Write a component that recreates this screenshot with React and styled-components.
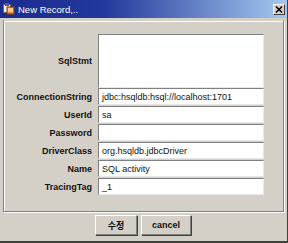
import { Fragment } from "react";
import styled, { createGlobalStyle } from "styled-components";

const GlobalStyle = createGlobalStyle`
  body {
    margin: 0;
    background: #d4d0c8;
    font-family: "Liberation Sans", Arial, "Noto Sans CJK KR", sans-serif;
  }
`;

const Window = styled.div`
  width: 288px;
  height: 243px;
  box-sizing: border-box;
  background: #d4d0c8;
  border-right: 1px solid #404040;
  border-bottom: 2px solid #404040;
  display: flex;
  flex-direction: column;
`;

const TitleBar = styled.div`
  height: 18px;
  display: flex;
  align-items: center;
  padding: 0 2px 0 3px;
  background: linear-gradient(to right, #1a2c90 0%, #22389a 36%, #a6c8ef 100%);
  color: #fff;
  font-size: 9.5px;
`;

const TitleText = styled.span`
  margin-left: 3px;
  flex: 1;
`;

const CloseBtn = styled.div`
  width: 12px;
  height: 11px;
  box-sizing: border-box;
  background: #d4d0c8;
  border: 1px solid;
  border-color: #fff #404040 #404040 #fff;
  display: flex;
  align-items: center;
  justify-content: center;
  margin-top: 1px;
`;

const Panel = styled.div`
  margin: 2px 3px 0 3px;
  height: 192px;
  box-sizing: border-box;
  border: 1px solid #808080;
  border-top-color: transparent;
  box-shadow: 1px 1px 0 #fff inset, 1px 1px 0 #fff;
  padding: 13px 19px 0 0;
  display: grid;
  grid-template-columns: 1fr 166px;
  grid-auto-rows: 17px;
  row-gap: 1px;
  column-gap: 6px;
`;

const Label = styled.div`
  font-size: 9px;
  font-weight: bold;
  color: #111;
  text-align: right;
  align-self: center;
  ${(p) => p.tall && "grid-row: span 3;"}
`;

const Field = styled.div`
  box-sizing: border-box;
  background: #fff;
  border: 1px solid;
  border-color: #808080 #e8e8e8 #e8e8e8 #808080;
  font-size: 9px;
  color: #111;
  padding: 0 3px;
  display: flex;
  align-items: center;
  white-space: nowrap;
  overflow: hidden;
  ${(p) => p.tall && "grid-row: span 3; height: 54px;"}
`;

const ButtonBar = styled.div`
  display: flex;
  justify-content: center;
  gap: 4px;
  padding-top: 3px;
  padding-right: 1px;
`;

const Button = styled.div`
  width: ${(p) => p.w}px;
  height: 20px;
  box-sizing: border-box;
  border: 1px solid;
  border-color: #fff #808080 #808080 #fff;
  box-shadow: 1px 1px 0 #404040;
  display: flex;
  align-items: center;
  justify-content: center;
  font-size: 9px;
  font-weight: bold;
  color: #111;
  font-family: "Liberation Sans", "Noto Sans CJK KR", sans-serif;
`;

const rows = [
  ["ConnectionString", "jdbc:hsqldb:hsql://localhost:1701"],
  ["UserId", "sa"],
  ["Password", ""],
  ["DriverClass", "org.hsqldb.jdbcDriver"],
  ["Name", "SQL activity"],
  ["TracingTag", "_1"],
];

function AppIcon() {
  return (
    <svg width="12" height="12" viewBox="0 0 12 12">
      <rect x="0.5" y="1.5" width="7" height="8" fill="#f4f0e0" stroke="#806040" />
      <rect x="4" y="4" width="7" height="7" fill="#e89030" stroke="#804000" />
      <rect x="2" y="0" width="4" height="3" fill="#3060c0" />
      <path d="M5 6h5M5 8h5" stroke="#fff" />
    </svg>
  );
}

export default function App() {
  return (
    <>
      <GlobalStyle />
      <Window>
        <TitleBar>
          <AppIcon />
          <TitleText>New Record,..</TitleText>
          <CloseBtn>
            <svg width="8" height="7" viewBox="0 0 8 7">
              <path d="M1 0.5l6 6M7 0.5l-6 6" stroke="#000" strokeWidth="1.5" />
            </svg>
          </CloseBtn>
        </TitleBar>
        <Panel>
          <Label tall>SqlStmt</Label>
          <Field tall />
          {rows.map(([label, value]) => (
            <Fragment key={label}>
              <Label>{label}</Label>
              <Field>{value}</Field>
            </Fragment>
          ))}
        </Panel>
        <ButtonBar>
          <Button w={42}>수정</Button>
          <Button w={50}>cancel</Button>
        </ButtonBar>
      </Window>
    </>
  );
}
